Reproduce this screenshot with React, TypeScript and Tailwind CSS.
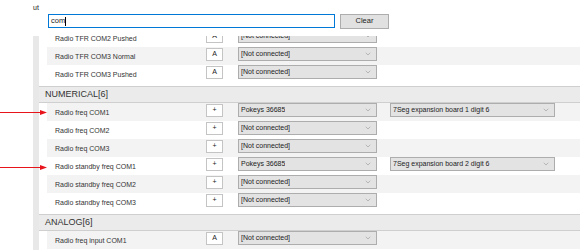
import { ChevronDown } from 'lucide-react'

type Row = { label: string; btn: string; dev: string; out?: string }
type Group = { title?: string; rows: Row[] }

const NC = '[Not connected]'

const groups: Group[] = [
  {
    rows: [
      { label: 'Radio TFR COM2 Pushed', btn: 'A', dev: NC },
      { label: 'Radio TFR COM3 Normal', btn: 'A', dev: NC },
      { label: 'Radio TFR COM3 Pushed', btn: 'A', dev: NC },
    ],
  },
  {
    title: 'NUMERICAL[6]',
    rows: [
      { label: 'Radio freq COM1', btn: '+', dev: 'Pokeys 36685', out: '7Seg expansion board 1 digit 6' },
      { label: 'Radio freq COM2', btn: '+', dev: NC },
      { label: 'Radio freq COM3', btn: '+', dev: NC },
      { label: 'Radio standby freq COM1', btn: '+', dev: 'Pokeys 36685', out: '7Seg expansion board 2 digit 6' },
      { label: 'Radio standby freq COM2', btn: '+', dev: NC },
      { label: 'Radio standby freq COM3', btn: '+', dev: NC },
    ],
  },
  {
    title: 'ANALOG[6]',
    rows: [{ label: 'Radio freq input COM1', btn: 'A', dev: NC }],
  },
]

function Combo({ value, width }: { value: string; width: string }) {
  return (
    <div
      className={`${width} h-[14px] flex items-center justify-between border border-[#adadad] bg-[#e3e3e3] pl-[2px] pr-[4px] text-[7px] text-[#222]`}
    >
      <span className="truncate">{value}</span>
      <ChevronDown className="w-[8px] h-[8px] text-[#888]" strokeWidth={1.5} />
    </div>
  )
}

function Arrow({ top }: { top: string }) {
  return (
    <svg className={`absolute left-0 ${top} w-[50px] h-[7px]`} viewBox="0 0 50 7">
      <line x1="0" y1="3.5" x2="42" y2="3.5" stroke="#e8141c" strokeWidth="1" />
      <polygon points="40,1 47,3.5 40,6" fill="#e8141c" />
    </svg>
  )
}

export default function App() {
  return (
    <div className="relative w-[580px] h-[250px] overflow-hidden bg-white font-['Liberation_Sans',Arial,sans-serif] text-[#222]">
      <div className="h-[13px] pl-[33px] pt-[4px] text-[7px] leading-[8px]">ut</div>

      <div className="flex items-center gap-[5px] pl-[48px] h-[16px]">
        <div className="w-[287px] h-[14px] border border-[#0078d7] bg-white flex items-center pl-[2px] text-[7.5px]">
          com<span className="w-px h-[9px] bg-black" />
        </div>
        <button className="w-[49px] h-[15px] border border-[#adadad] bg-[#e1e1e1] text-[7.5px] leading-none">
          Clear
        </button>
      </div>

      <div className="flex h-[214px] mt-[7px] overflow-hidden">
        <div className="ml-[33px] w-[6px] bg-[#e8e8e8] shrink-0" />
        <div className="flex-1 -mt-[7px]">
          {groups.map((g, gi) => (
            <div key={gi}>
              {g.title && (
                <div className="h-[17px] mt-[3px] flex items-center pl-[6px] bg-[#ebebeb] border-y border-[#cfcfcf] text-[9px] text-[#333]">
                  {g.title}
                </div>
              )}
              {g.rows.map((r, ri) => {
                const shaded = gi === 0 ? ri % 2 === 1 : ri % 2 === 0
                return (
                  <div key={r.label} className="pl-[8px]">
                    <div
                      className={`h-[18px] flex items-start ${shaded ? 'bg-[#f3f3f3]' : 'bg-white'}`}
                    >
                      <div className="w-[159px] pl-[8px] pt-[6px] text-[7px] leading-[8px] text-[#333]">
                        {r.label}
                      </div>
                      <div className="mt-[1px] w-[17px] h-[13px] border border-[#c4c4c4] bg-white flex items-center justify-center text-[7px]">
                        {r.btn}
                      </div>
                      <div className="ml-[15px]">
                        <Combo value={r.dev} width="w-[139px]" />
                      </div>
                      {r.out && (
                        <div className="ml-[13px]">
                          <Combo value={r.out} width="w-[165px]" />
                        </div>
                      )}
                    </div>
                  </div>
                )
              })}
            </div>
          ))}
        </div>
      </div>

      <Arrow top="top-[109px]" />
      <Arrow top="top-[164px]" />
    </div>
  )
}
